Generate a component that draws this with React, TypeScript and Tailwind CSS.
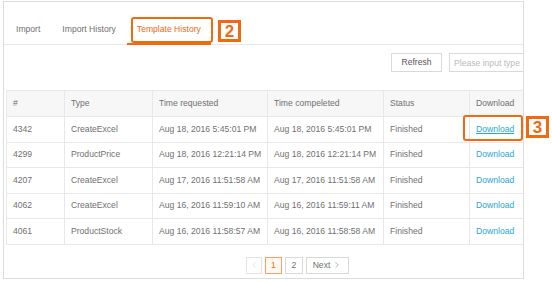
import React from 'react';
import { ChevronLeft, ChevronRight } from 'lucide-react';

const rows = [
  { id: '4342', type: 'CreateExcel', requested: 'Aug 18, 2016 5:45:01 PM', completed: 'Aug 18, 2016 5:45:01 PM' },
  { id: '4299', type: 'ProductPrice', requested: 'Aug 18, 2016 12:21:14 PM', completed: 'Aug 18, 2016 12:21:14 PM' },
  { id: '4207', type: 'CreateExcel', requested: 'Aug 17, 2016 11:51:58 AM', completed: 'Aug 17, 2016 11:51:58 AM' },
  { id: '4062', type: 'CreateExcel', requested: 'Aug 16, 2016 11:59:10 AM', completed: 'Aug 16, 2016 11:59:11 AM' },
  { id: '4061', type: 'ProductStock', requested: 'Aug 16, 2016 11:58:57 AM', completed: 'Aug 16, 2016 11:58:58 AM' },
];

const cols = [
  { label: '#', w: 'w-[58px]' },
  { label: 'Type', w: 'w-[88px]' },
  { label: 'Time requested', w: 'w-[115px]' },
  { label: 'Time compeleted', w: 'w-[116px]' },
  { label: 'Status', w: 'w-[86px]' },
  { label: 'Download', w: 'w-[80px]' },
];

function Badge({ n }: { n: string }) {
  return (
    <div className="flex h-[22px] w-[23px] items-center justify-center border-[3px] border-[#f26a0f] bg-white text-[17px] font-bold leading-none text-[#f26a0f]">
      {n}
    </div>
  );
}

export default function App() {
  return (
    <div className="relative h-[282px] w-[552px] overflow-hidden bg-white font-['Liberation_Sans',Arial,sans-serif] text-[8.6px] text-[#707070]">
      <div className="ml-[3px] mt-[1px] flex h-[278px] w-[521px] flex-col overflow-hidden border border-[#dcdcdc]">
        {/* tabs */}
        <div className="flex h-[43px] items-end border-b border-[#e8e8e8] pl-[1px]">
          <div className="px-[11px] pb-[8px]">Import</div>
          <div className="px-[11px] pb-[8px]">Import History</div>
          <div className="-mb-px border-b-2 border-[#f26a0f] px-[10px] pb-[7px] text-[#f26a0f]">Template History</div>
        </div>

        {/* toolbar */}
        <div className="mt-[8px] flex justify-end gap-[7px]">
          <button className="h-[19px] w-[51px] border border-[#d9d9d9] bg-white text-[8.6px] text-[#555]">Refresh</button>
          <input
            placeholder="Please input type"
            className="-mr-[30px] h-[19px] w-[104px] border border-[#d9d9d9] px-[4px] text-[8.6px] placeholder:text-[#bbb] outline-none"
          />
        </div>

        {/* table */}
        <table className="ml-[2px] mt-[18px] w-[543px] table-fixed border-collapse">
          <thead>
            <tr className="h-[26px] bg-[#f7f7f7]">
              {cols.map((c) => (
                <th key={c.label} className={`${c.w} border border-[#e8e8e8] pl-[6px] text-left font-normal`}>
                  {c.label}
                </th>
              ))}
            </tr>
          </thead>
          <tbody>
            {rows.map((r, i) => (
              <tr key={r.id} className="h-[25.5px]">
                <td className="border border-[#e8e8e8] pl-[6px]">{r.id}</td>
                <td className="border border-[#e8e8e8] pl-[6px]">{r.type}</td>
                <td className="border border-[#e8e8e8] pl-[6px]">{r.requested}</td>
                <td className="border border-[#e8e8e8] pl-[6px]">{r.completed}</td>
                <td className="border border-[#e8e8e8] pl-[6px]">Finished</td>
                <td className="border border-[#e8e8e8] pl-[6px]">
                  <span className={i === 0 ? 'text-[#2aa6d0] underline' : 'text-[#2aa6d0]'}>Download</span>
                </td>
              </tr>
            ))}
          </tbody>
        </table>

        {/* pagination */}
        <div className="mt-[12px] flex gap-[3px] pl-[242px]">
          <div className="flex h-[17px] w-[16px] items-center justify-center border border-[#e3e3e3] text-[#ccc]">
            <ChevronLeft size={10} strokeWidth={1.2} />
          </div>
          <div className="flex h-[17px] w-[17px] items-center justify-center border border-[#f5a06a] bg-[#fff8f3] text-[#f26a0f]">1</div>
          <div className="flex h-[17px] w-[18px] items-center justify-center border border-[#d9d9d9]">2</div>
          <div className="flex h-[17px] w-[43px] items-center justify-center gap-[2px] border border-[#d9d9d9]">
            Next <ChevronRight size={10} strokeWidth={1.2} />
          </div>
        </div>
      </div>

      {/* annotations */}
      <div className="absolute left-[131px] top-[17px] h-[26px] w-[82px] rounded-[3px] border-2 border-[#f26a0f]" />
      <div className="absolute left-[218px] top-[20px]">
        <Badge n="2" />
      </div>
      <div className="absolute left-[463px] top-[115px] h-[26px] w-[60px] rounded-[3px] border-2 border-[#f26a0f]" />
      <div className="absolute left-[526px] top-[116px]">
        <Badge n="3" />
      </div>
    </div>
  );
}
